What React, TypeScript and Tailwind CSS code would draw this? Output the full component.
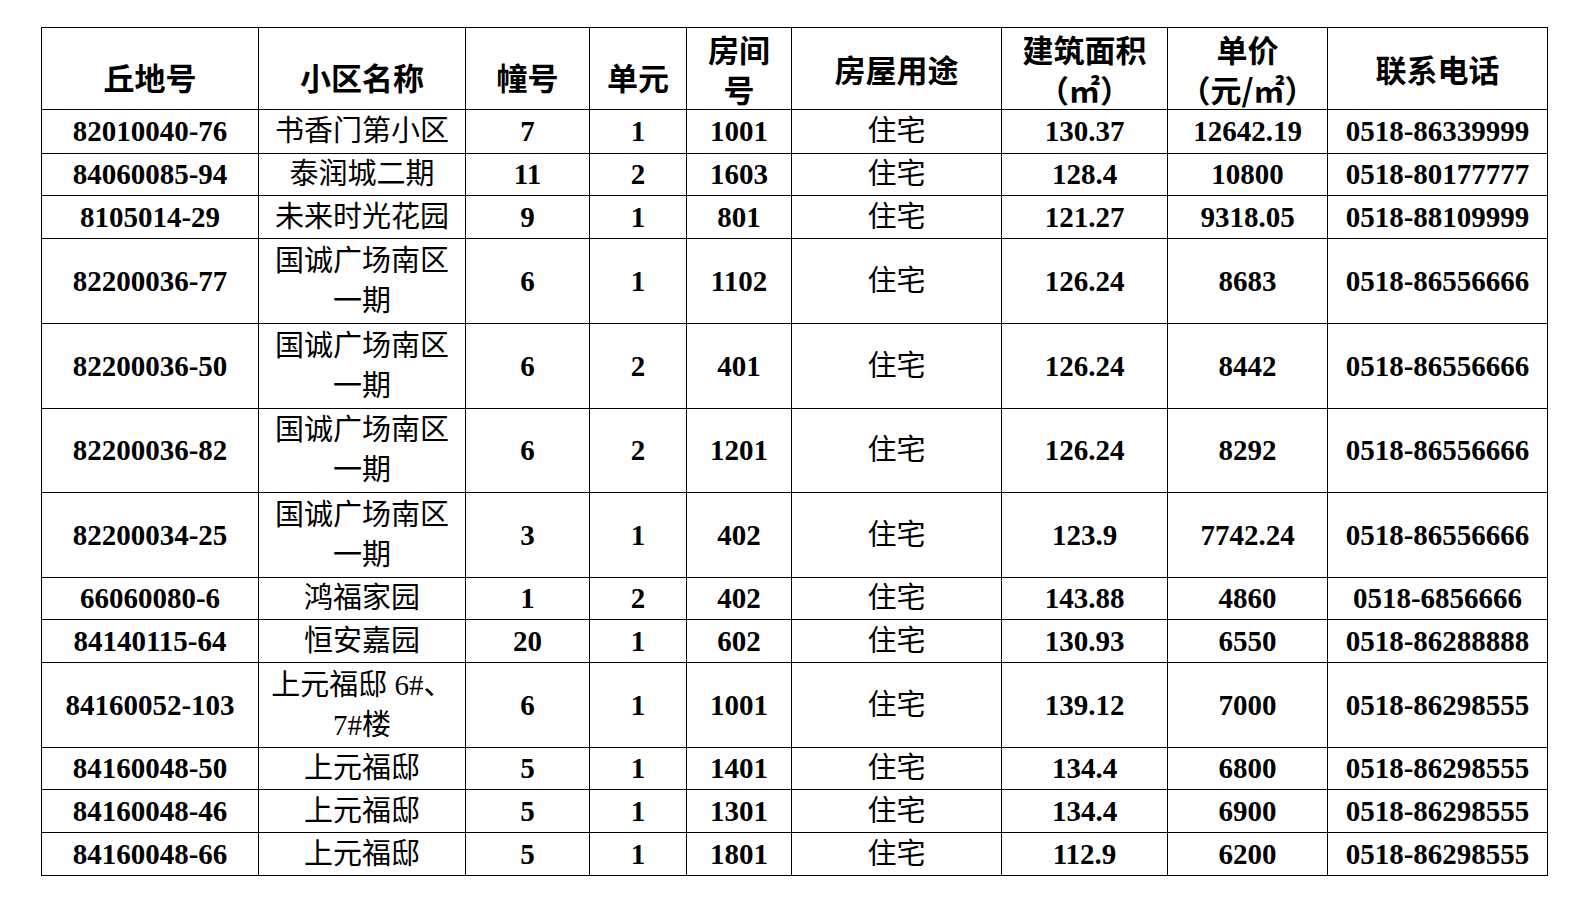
type Row = {
  id: string;
  name: string[];
  bldg: string;
  unit: string;
  room: string;
  use: string;
  area: string;
  price: string;
  phone: string;
};

const data: Row[] = [
  { id: '82010040-76', name: ['书香门第小区'], bldg: '7', unit: '1', room: '1001', use: '住宅', area: '130.37', price: '12642.19', phone: '0518-86339999' },
  { id: '84060085-94', name: ['泰润城二期'], bldg: '11', unit: '2', room: '1603', use: '住宅', area: '128.4', price: '10800', phone: '0518-80177777' },
  { id: '8105014-29', name: ['未来时光花园'], bldg: '9', unit: '1', room: '801', use: '住宅', area: '121.27', price: '9318.05', phone: '0518-88109999' },
  { id: '82200036-77', name: ['国诚广场南区', '一期'], bldg: '6', unit: '1', room: '1102', use: '住宅', area: '126.24', price: '8683', phone: '0518-86556666' },
  { id: '82200036-50', name: ['国诚广场南区', '一期'], bldg: '6', unit: '2', room: '401', use: '住宅', area: '126.24', price: '8442', phone: '0518-86556666' },
  { id: '82200036-82', name: ['国诚广场南区', '一期'], bldg: '6', unit: '2', room: '1201', use: '住宅', area: '126.24', price: '8292', phone: '0518-86556666' },
  { id: '82200034-25', name: ['国诚广场南区', '一期'], bldg: '3', unit: '1', room: '402', use: '住宅', area: '123.9', price: '7742.24', phone: '0518-86556666' },
  { id: '66060080-6', name: ['鸿福家园'], bldg: '1', unit: '2', room: '402', use: '住宅', area: '143.88', price: '4860', phone: '0518-6856666' },
  { id: '84140115-64', name: ['恒安嘉园'], bldg: '20', unit: '1', room: '602', use: '住宅', area: '130.93', price: '6550', phone: '0518-86288888' },
  { id: '84160052-103', name: ['上元福邸 6#、', '7#楼'], bldg: '6', unit: '1', room: '1001', use: '住宅', area: '139.12', price: '7000', phone: '0518-86298555' },
  { id: '84160048-50', name: ['上元福邸'], bldg: '5', unit: '1', room: '1401', use: '住宅', area: '134.4', price: '6800', phone: '0518-86298555' },
  { id: '84160048-46', name: ['上元福邸'], bldg: '5', unit: '1', room: '1301', use: '住宅', area: '134.4', price: '6900', phone: '0518-86298555' },
  { id: '84160048-66', name: ['上元福邸'], bldg: '5', unit: '1', room: '1801', use: '住宅', area: '112.9', price: '6200', phone: '0518-86298555' },
];

const cell = 'flex flex-col items-center justify-center text-center border-r border-b border-black leading-[40px]';
const num = `${cell} font-bold`;
const cjk = `${cell} font-normal`;

// header cells of the first four columns sit a little lower in the source sheet
function Header({ lines, low }: { lines: string[]; low?: boolean }) {
  return (
    <div className={`${cell} font-bold text-[31px] [font-family:'Noto_Sans_CJK_SC',sans-serif] ${low ? 'pt-4' : ''}`}>
      {lines.map((l) => (
        <span key={l}>{l}</span>
      ))}
    </div>
  );
}

export default function App() {
  return (
    <div className="min-h-screen bg-white pt-[27px] pl-[41px] text-black">
      <div className="grid w-[1507px] grid-cols-[217px_207px_124px_97px_105px_210px_166px_160px_220px] grid-rows-[82px_43.5px_42.5px_42.5px_85px_85px_84px_85px_42.5px_42.5px_85px_42.5px_42.5px_43.5px] border-l border-t border-black text-[29px] [font-family:'Liberation_Serif','Noto_Sans_CJK_SC',serif]">
        <Header lines={['丘地号']} low />
        <Header lines={['小区名称']} low />
        <Header lines={['幢号']} low />
        <Header lines={['单元']} low />
        <Header lines={['房间', '号']} />
        <Header lines={['房屋用途']} />
        <Header lines={['建筑面积', '（㎡）']} />
        <Header lines={['单价', '（元/㎡）']} />
        <Header lines={['联系电话']} />

        {data.map((r) => (
          <div key={r.id} className="contents">
            <div className={num}>{r.id}</div>
            <div className={cjk}>
              {r.name.map((l) => (
                <span key={l}>{l}</span>
              ))}
            </div>
            <div className={num}>{r.bldg}</div>
            <div className={num}>{r.unit}</div>
            <div className={num}>{r.room}</div>
            <div className={cjk}>{r.use}</div>
            <div className={num}>{r.area}</div>
            <div className={num}>{r.price}</div>
            <div className={num}>{r.phone}</div>
          </div>
        ))}
      </div>
    </div>
  );
}
